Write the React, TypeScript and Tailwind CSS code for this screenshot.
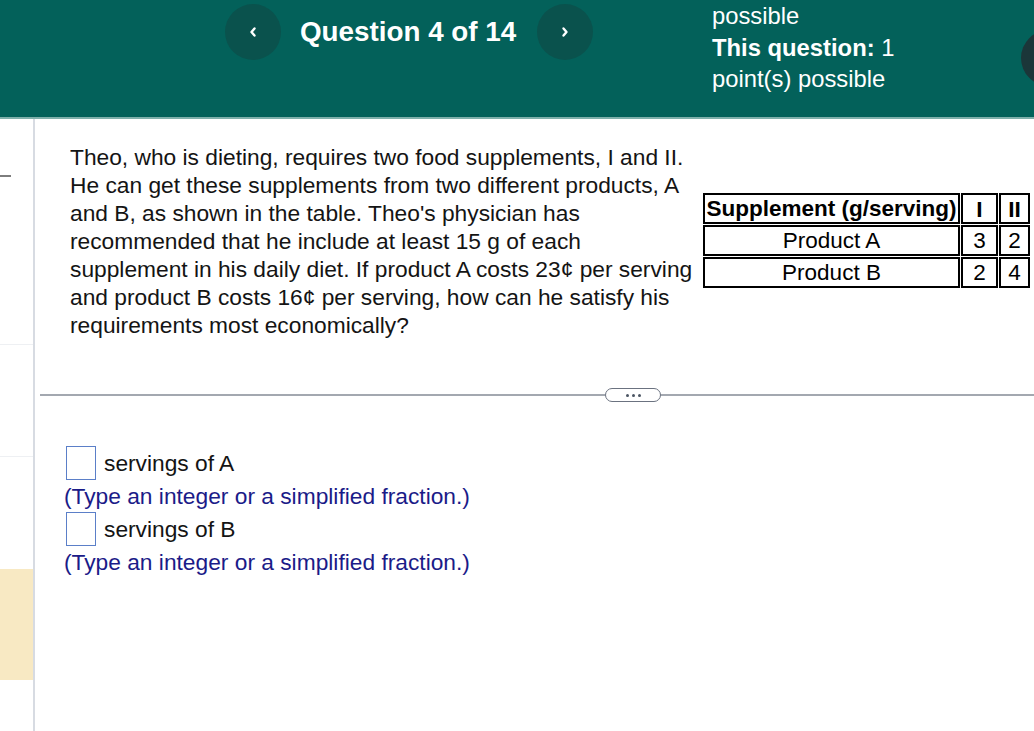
import React from "react";

const Chevron = ({ dir }: { dir: "left" | "right" }) => (
  <svg width="10" height="14" viewBox="0 0 10 14" fill="none">
    <path
      d={dir === "left" ? "M6.5 3.5 L3.5 7 L6.5 10.5" : "M3.5 3.5 L6.5 7 L3.5 10.5"}
      stroke="white"
      strokeWidth="2.4"
      strokeLinecap="round"
      strokeLinejoin="round"
    />
  </svg>
);

const questionLines = [
  "Theo, who is dieting, requires two food supplements, I and II.",
  "He can get these supplements from two different products, A",
  "and B, as shown in the table. Theo's physician has",
  "recommended that he include at least 15 g of each",
  "supplement in his daily diet. If product A costs 23¢ per serving",
  "and product B costs 16¢ per serving, how can he satisfy his",
  "requirements most economically?",
];

const rows = [
  { name: "Product A", one: "3", two: "2" },
  { name: "Product B", one: "2", two: "4" },
];

const AnswerRow = ({ label }: { label: string }) => (
  <>
    <div className="flex items-center h-[34px]">
      <div className="ml-[2px] w-[30px] h-[34px] border border-[#5b7fc8] bg-white" />
      <span className="ml-[8px] text-[#141414]">{label}</span>
    </div>
    <div className="leading-[32px] text-[#1b1b88]">(Type an integer or a simplified fraction.)</div>
  </>
);

export default function App() {
  return (
    <div className="relative w-[1034px] h-[731px] overflow-hidden bg-white font-['Liberation_Sans',Arial,sans-serif]">
      <header className="relative h-[119px] bg-[#03615a] border-b-2 border-[#7fb0ab] flex items-start pl-[225px] pt-[4px] overflow-hidden">
        <button className="w-14 h-14 rounded-full bg-[#0a524d] flex items-center justify-center shrink-0">
          <Chevron dir="left" />
        </button>
        <h1 className="ml-[19px] w-[237px] text-white font-bold text-[27.8px] leading-[56px] whitespace-nowrap">
          Question 4 of 14
        </h1>
        <button className="w-14 h-14 rounded-full bg-[#0a524d] flex items-center justify-center shrink-0">
          <Chevron dir="right" />
        </button>
        <div className="ml-[119px] -mt-[4px] text-white text-[23.8px] leading-[31.5px] whitespace-nowrap">
          <div>possible</div>
          <div>
            <span className="font-bold">This question:</span> 1
          </div>
          <div>point(s) possible</div>
        </div>
        <div className="absolute left-[1021px] top-[30px] w-14 h-14 rounded-full bg-[#1b3639]" />
      </header>

      <div className="flex h-[612px]">
        <aside className="w-[35px] shrink-0 border-r-2 border-[#d7dbe2] flex flex-col">
          <div className="mt-[56px] h-[2px] w-[11px] bg-[#7d7d7d]" />
          <div className="mt-[167px] h-px w-full bg-[#eef0f3]" />
          <div className="mt-[111px] h-px w-full bg-[#eef0f3]" />
          <div className="mt-[112px] h-[111px] w-full bg-[#f8e9c3]" />
        </aside>

        <main className="flex-1 text-[22.75px] text-[#141414]">
          <div className="flex pl-[35px] pt-[24px]">
            <div className="w-[632px] shrink-0 leading-[28px] whitespace-nowrap overflow-hidden">
              {questionLines.map((l) => (
                <div key={l}>{l}</div>
              ))}
            </div>
            <table className="mt-[49px] self-start border-separate border-spacing-[1px] text-black leading-[24px]">
              <tbody>
                <tr className="h-[31px]">
                  <th className="w-[257px] p-0 border-[2.5px] border-black font-bold whitespace-nowrap text-[22.5px]">Supplement (g/serving)</th>
                  <th className="w-[37px] p-0 border-[2.5px] border-black font-bold">I</th>
                  <th className="w-[31px] p-0 border-[2.5px] border-black font-bold">II</th>
                </tr>
                {rows.map((r) => (
                  <tr key={r.name} className="h-[31px]">
                    <td className="p-0 border-[2.5px] border-black text-center text-[22.5px]">{r.name}</td>
                    <td className="p-0 border-[2.5px] border-black text-center text-[22.5px]">{r.one}</td>
                    <td className="p-0 border-[2.5px] border-black text-center text-[22.5px]">{r.two}</td>
                  </tr>
                ))}
              </tbody>
            </table>
          </div>

          <div className="ml-[5px] mt-[49px] h-[14px] flex items-center">
            <div className="w-[565px] h-[2px] bg-[#a3a8b0]" />
            <div className="w-[56px] h-[14px] rounded-full border-[1.5px] border-[#6b7280] bg-white flex items-center justify-center gap-[3px]">
              <span className="w-[3px] h-[3px] rounded-full bg-[#4b5563]" />
              <span className="w-[3px] h-[3px] rounded-full bg-[#4b5563]" />
              <span className="w-[3px] h-[3px] rounded-full bg-[#4b5563]" />
            </div>
            <div className="flex-1 h-[2px] bg-[#a3a8b0]" />
          </div>

          <div className="pl-[29px] mt-[44px]">
            <AnswerRow label="servings of A" />
            <AnswerRow label="servings of B" />
          </div>
        </main>
      </div>
    </div>
  );
}
